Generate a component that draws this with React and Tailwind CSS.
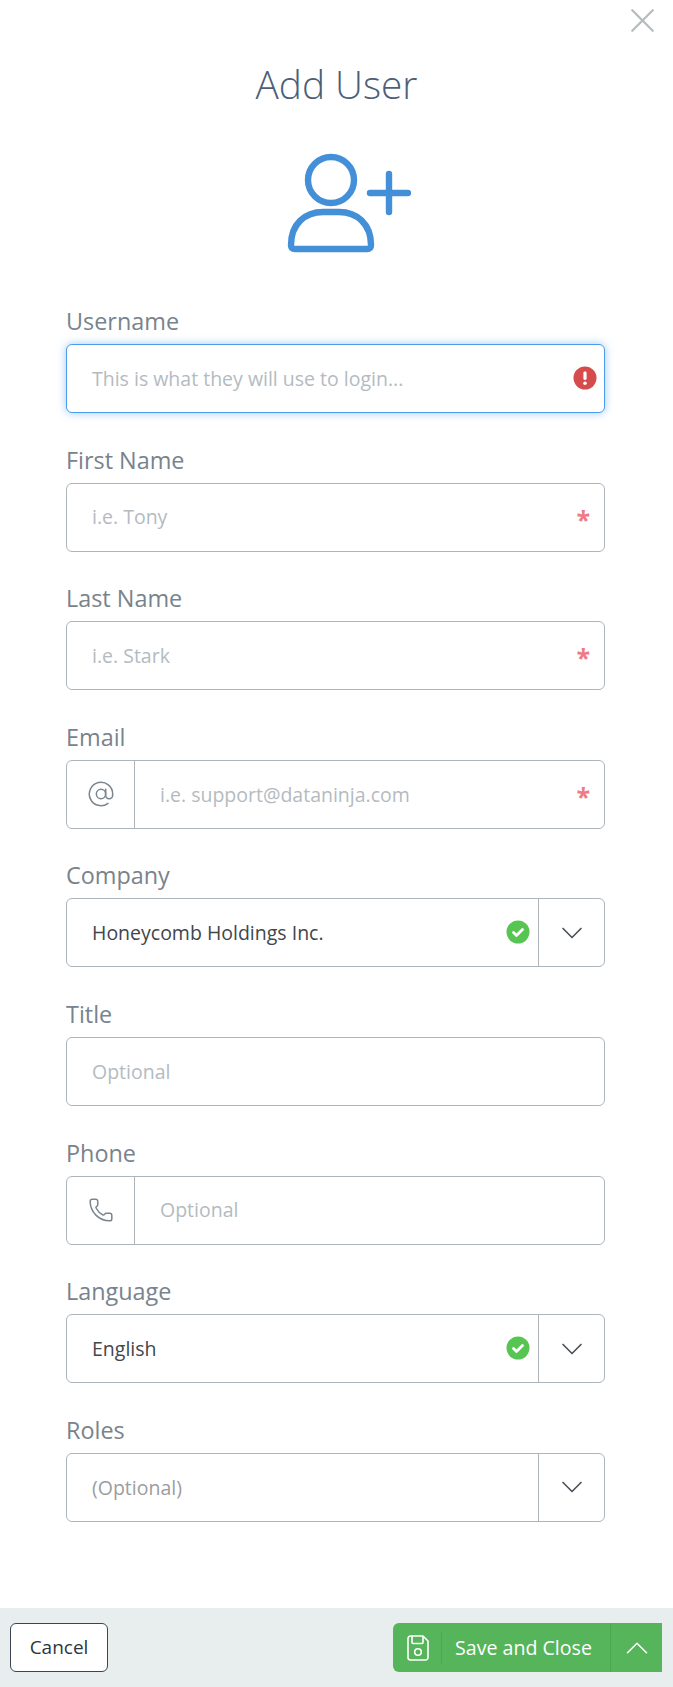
import React from "react";
import { AtSign, Phone, ChevronDown, ChevronUp, X } from "lucide-react";

const FONT = "font-['Open_Sans','Noto_Sans',sans-serif]";

function Required() {
  return (
    <span className="absolute right-[14px] top-[20px] text-[25px] leading-[30px] font-bold text-[#ee7b84]">*</span>
  );
}

function ErrorBadge() {
  return (
    <svg className="absolute right-[7px] top-[21px]" width="24" height="24" viewBox="0 0 24 24">
      <circle cx="12" cy="12" r="11.5" fill="#d64b4b" />
      <rect x="10.4" y="5.5" width="3.2" height="8.5" rx="1.4" fill="#fff" />
      <circle cx="12" cy="17.3" r="1.8" fill="#fff" />
    </svg>
  );
}

function OkBadge() {
  return (
    <svg className="absolute right-[8px] top-[21px]" width="24" height="24" viewBox="0 0 24 24">
      <circle cx="12" cy="12" r="11.5" fill="#57c552" />
      <path d="M7.5 12.5l3 3 6-6" fill="none" stroke="#fff" strokeWidth="2.8" strokeLinecap="round" strokeLinejoin="round" />
    </svg>
  );
}

function Field({ label, placeholder, value, icon, required, select, ok, focused, error }) {
  return (
    <div className="mb-[32.6px]">
      <div className="h-[37px] -translate-y-px text-[23.4px] leading-[30px] text-[#78838d]">{label}</div>
      <div
        className={
          "flex h-[69px] rounded-[6px] border bg-white " +
          (focused
            ? "border-[#4a9be8] shadow-[0_0_8px_rgba(74,155,232,0.55)]"
            : "border-[#adb5bb]")
        }
      >
        {icon && (
          <div className="flex w-[68px] shrink-0 items-center justify-center border-r border-[#adb5bb] text-[#7b858d]">
            {icon}
          </div>
        )}
        <div className="relative flex flex-1 items-center pl-[25px] text-[19.5px]">
          {value ? (
            <span className="text-[#3f464c]">{value}</span>
          ) : (
            <span className={select ? "text-[#9a9da0]" : "text-[#b3bbc1]"}>{placeholder}</span>
          )}
          {required && <Required />}
          {error && <ErrorBadge />}
          {ok && <OkBadge />}
        </div>
        {select && (
          <div className="flex w-[66px] shrink-0 items-center justify-center border-l border-[#adb5bb] text-[#4b5258]">
            <ChevronDown size={36} strokeWidth={1.1} />
          </div>
        )}
      </div>
    </div>
  );
}

function SaveIcon() {
  return (
    <svg width="22" height="26" viewBox="0 0 22 26" fill="none" stroke="#fff" strokeWidth="1.6" strokeLinejoin="round">
      <path d="M3.5 1h12.5l5 5v16.5a2.5 2.5 0 0 1-2.5 2.5h-15A2.5 2.5 0 0 1 1 22.5v-19A2.5 2.5 0 0 1 3.500 1z" />
      <path d="M5 1v6.500a1 1 0 0 0 1 1h9a1 1 0 0 0 1-1V1" />
      <circle cx="11" cy="17" r="3.300" />
    </svg>
  );
}

export default function App() {
  return (
    <div className={"relative flex h-[1687px] w-[673px] flex-col bg-white " + FONT}>
      <button className="absolute right-[10px] top-0 text-[#b4bcbf]">
        <X size={41} strokeWidth={1.3} />
      </button>

      <h1 className="mt-[56px] text-center text-[38.8px] font-light leading-[56px] text-[#4d5f78]">Add User</h1>

      <div className="mt-[41px] flex justify-center pl-[24px]">
        <svg width="124" height="102" viewBox="0 0 124 102" fill="none" stroke="#4490d8" strokeWidth="6.4" strokeLinecap="round" strokeLinejoin="round">
          <circle cx="44" cy="27" r="23" />
          <path d="M4 92c0-21 14-33 32-33h16c18 0 32 12 32 33 0 3-1 4-4 4H8c-3 0-4-1-4-4z" />
          <path d="M83 40h38M102 21v38" />
        </svg>
      </div>

      <div className="mt-[52px] px-[66px] pr-[68px]">
        <Field label="Username" placeholder="This is what they will use to login..." focused error />
        <Field label="First Name" placeholder="i.e. Tony" required />
        <Field label="Last Name" placeholder="i.e. Stark" required />
        <Field label="Email" placeholder="i.e. support@dataninja.com" required icon={<AtSign size={28} strokeWidth={1.3} />} />
        <Field label="Company" value="Honeycomb Holdings Inc." select ok />
        <Field label="Title" placeholder="Optional" />
        <Field label="Phone" placeholder="Optional" icon={<Phone size={26} strokeWidth={1.4} />} />
        <Field label="Language" value="English" select ok />
        <Field label="Roles" placeholder="(Optional)" select />
      </div>

      <div className="absolute inset-x-0 bottom-0 flex h-[79px] items-center justify-between bg-[#e8eeee] pl-[10px] pr-[11px]">
        <button className="h-[49px] w-[98px] rounded-[6px] border border-[#3d4650] bg-white text-[19px] text-[#2c3640]">Cancel</button>
        <div className="flex h-[49px] w-[269px] items-center rounded-l-[6px] bg-[#56b45a] text-white">
          <div className="flex h-[32px] w-[49px] items-center justify-center border-r border-[#4ba650] pl-[1px]">
            <SaveIcon />
          </div>
          <div className="flex-1 pl-[13px] text-[19.6px]">Save and Close</div>
          <div className="flex h-full w-[52px] items-center justify-center border-l border-[#4ba650]">
            <ChevronUp size={38} strokeWidth={1} />
          </div>
        </div>
      </div>
    </div>
  );
}
